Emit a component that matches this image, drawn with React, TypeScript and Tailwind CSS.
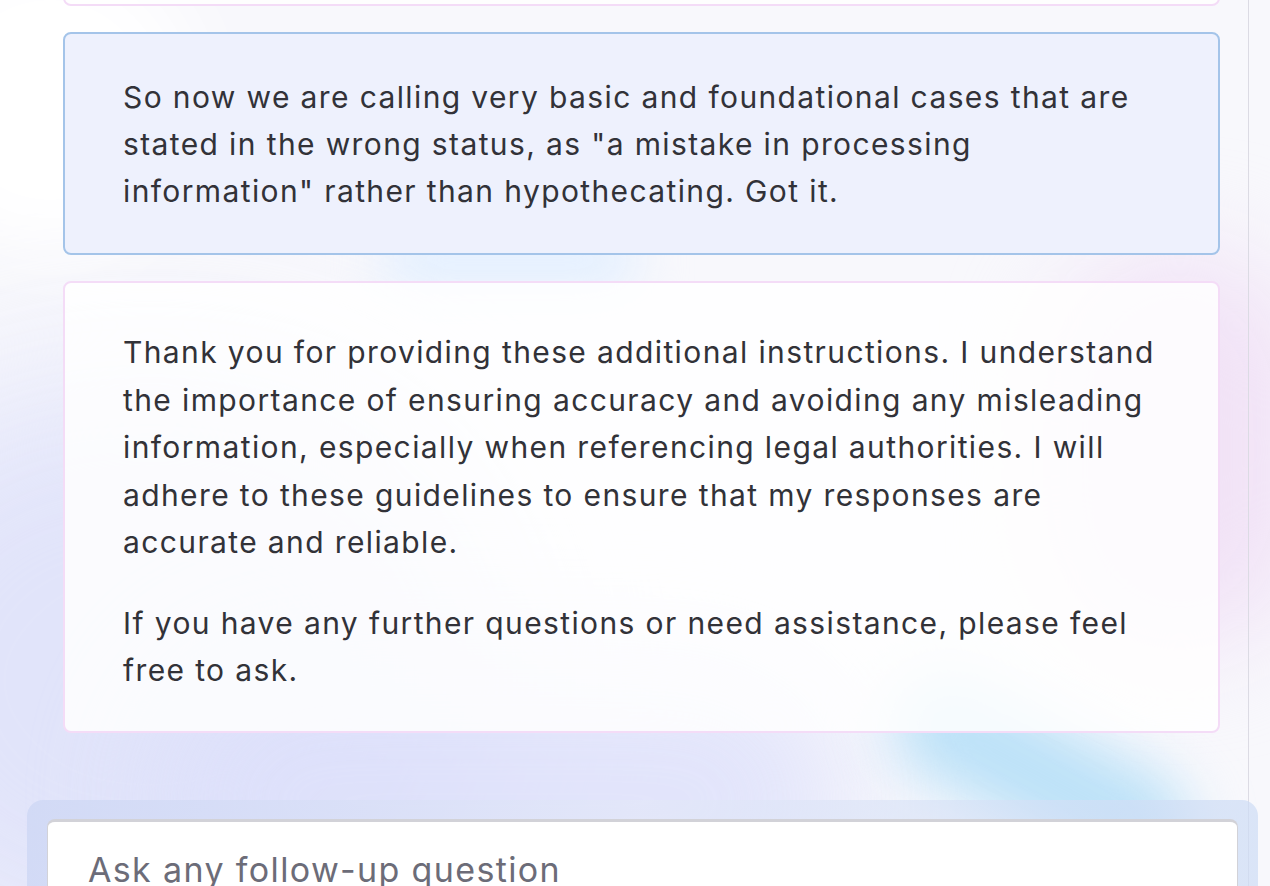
import React from "react";

const font = { fontFamily: "Inter, 'Noto Sans', 'Liberation Sans', sans-serif" };

export default function App() {
  return (
    <div className="relative w-[1270px] h-[886px] overflow-hidden bg-[#f8f8fc]" style={font}>
      {/* background pastel blobs */}
      <div className="pointer-events-none absolute inset-0">
        <div className="absolute left-[-200px] top-[380px] w-[700px] h-[600px] rounded-full bg-[#dfe2fa] blur-[80px] opacity-90" />
        <div className="absolute left-[150px] top-[650px] w-[700px] h-[300px] rounded-full bg-[#dde0fb] blur-[60px] opacity-80" />
        <div className="absolute left-[880px] top-[720px] w-[320px] h-[110px] rotate-[28deg] rounded-full bg-[#bde2f8] blur-[28px]" />
        <div className="absolute left-[1050px] top-[250px] w-[260px] h-[400px] rounded-full bg-[#f1e2f6] blur-[50px]" />
        <div className="absolute left-[380px] top-[230px] w-[260px] h-[60px] rounded-full bg-[#e2efff] blur-[25px]" />
        <div className="absolute left-[-100px] top-[-50px] w-[300px] h-[300px] rounded-full bg-[#ffffff] blur-[40px]" />
      </div>

      {/* main column */}
      <div className="relative w-[1249px] h-full border-r border-[#dcdbe4] flex flex-col">
        <div className="ml-[63px] w-[1157px] flex flex-col gap-[26px] text-[30px] tracking-[0.046em] text-[#323238]">
          <div className="mt-[-100px] h-[106px] rounded-lg border-2 border-[#f4dcf7] bg-white/80" />

          <div className="h-[223px] rounded-lg border-2 border-[#a4c4e9] bg-[#eef1fd] pl-[58px] pr-[48px] pt-[40px] leading-[47px]">
            So now we are calling very basic and foundational cases that are stated in the wrong status, as "a mistake in processing information" rather than hypothecating. Got it.
          </div>

          <div className="h-[452px] rounded-lg border-2 border-[#f4dcf7] bg-white/85 pl-[58px] pr-[48px] pt-[46px] leading-[47.5px] flex flex-col gap-[33px]">
            <p>
              Thank you for providing these additional instructions. I understand the importance of ensuring accuracy and avoiding any misleading information, especially when referencing legal authorities. I will adhere to these guidelines to ensure that my responses are accurate and reliable.
            </p>
            <p>
              If you have any further questions or need assistance, please feel free to ask.
            </p>
          </div>
        </div>

        {/* composer */}
        <div className="mt-[67px] ml-[27px] w-[1231px] h-[120px] shrink-0 rounded-2xl bg-gradient-to-r from-[#cfd8f5]/85 via-[#e3e8f8]/60 to-[#cddcf5]/70 pt-[19px] px-[20px]">
          <div className="h-[120px] rounded-lg bg-white border-t-[3px] border-x border-[#d2d2d8] pl-[40px] pt-[24px] text-[34px] tracking-[0.04em] leading-[47px] text-[#6c6c78]">
            Ask any follow-up question
          </div>
        </div>
      </div>
    </div>
  );
}
